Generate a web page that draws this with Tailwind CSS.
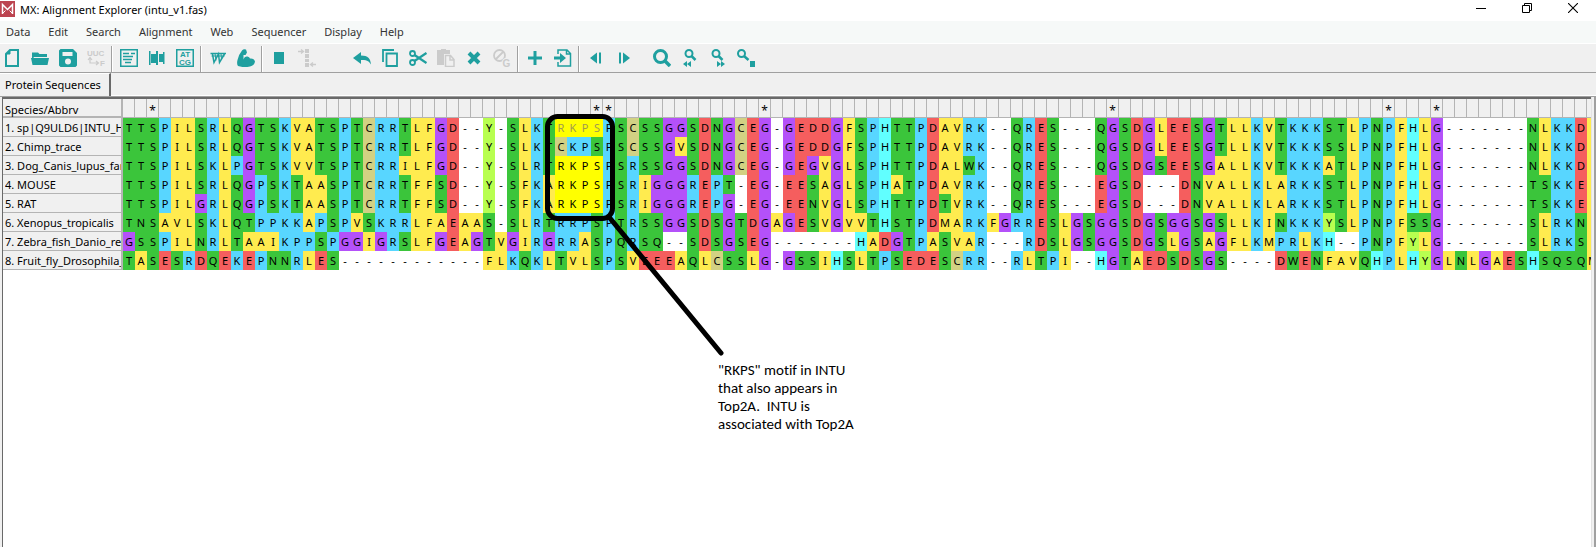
<!DOCTYPE html>
<html lang="en">
<head>
    <meta charset="UTF-8">
    <meta name="viewport" content="width=device-width, initial-scale=1.0">
    <title>MX: Alignment Explorer (intu_v1.fas)</title>
    <script src="https://cdn.jsdelivr.net/npm/@tailwindcss/browser@4"></script>
</head>
<body class="flex h-screen flex-col overflow-hidden bg-[#f0f0f0] font-['Noto_Sans','Open_Sans',sans-serif] text-[11px] text-black">
    <!-- Title bar -->
    <header class="flex h-[21px] shrink-0 items-start bg-white">
        <svg class="mt-px h-4 w-[15px]" viewBox="0 0 15 16">
            <rect width="15" height="16" fill="#bc4450"/>
            <path d="M2.500 13V3.500l5 5 5-5V13" fill="none" stroke="#fff" stroke-width="1.500"/>
            <path d="M2.500 12.500l3-3M12.500 12.500l-3-3" fill="none" stroke="#fff"/>
        </svg>
        <h1 class="ml-[5px] h-5 leading-5">MX: Alignment Explorer (intu_v1.fas)</h1>
        <div class="ml-auto flex">
            <button class="flex h-4 w-[46px] items-center justify-center" aria-label="Minimize"><svg width="10" height="10" viewBox="0 0 10 10"><path d="M0 5.500h10" stroke="#000"/></svg></button>
            <button class="flex h-4 w-[46px] items-center justify-center" aria-label="Restore"><svg width="10" height="10" viewBox="0 0 10 10" fill="none" stroke="#000"><path d="M.5 2.500h7v7h-7zM2.500 2.500v-2h7v7h-2"/></svg></button>
            <button class="flex h-4 w-[46px] items-center justify-center" aria-label="Close"><svg width="10" height="10" viewBox="0 0 10 10"><path d="M0 0l10 10M10 0L0 10" stroke="#000" stroke-width="1.100"/></svg></button>
        </div>
    </header>

    <!-- Menu -->
    <nav class="flex h-[23px] shrink-0 items-center gap-[18px] border-b border-white bg-[#f6f9f8] pl-1.5 text-[#333]">
        <button>Data</button>
        <button>Edit</button>
        <button>Search</button>
        <button>Alignment</button>
        <button>Web</button>
        <button>Sequencer</button>
        <button>Display</button>
        <button>Help</button>
    </nav>

    <!-- Toolbar -->
    <div class="flex h-[29px] shrink-0 items-stretch border-b border-[#a0a0a0] text-[#1f9f9f]">
        <div class="-ml-0.5 flex">
            <button class="flex w-7 items-center justify-center" aria-label="New"><svg width="18" height="18" viewBox="0 0 18 18" fill="none" stroke="currentColor" stroke-width="2"><path d="M7 1h8v16H3V5z"/><path d="M3 5h4V1z" fill="currentColor" stroke-width="1"/></svg></button>
            <button class="flex w-7 items-center justify-center" aria-label="Open"><svg width="18" height="18" viewBox="0 0 18 18" fill="currentColor"><path d="M1 3.500h6l1.500 1.500H16v3H3l-2 3zM0 9h18l-1.500 7H1.500z"/></svg></button>
            <button class="flex w-7 items-center justify-center" aria-label="Save"><svg width="18" height="18" viewBox="0 0 18 18" fill="currentColor"><path fill-rule="evenodd" d="M1.500 0H14l4 4v12.500L16.500 18h-15L0 16.500v-15zM3.500 3v4h10V3zM9 9.500a3 3 0 100 6 3 3 0 000-6z"/></svg></button>
            <button class="flex w-7 items-center justify-center text-[#cbcbcb]" aria-label="Translate"><svg width="18" height="18" viewBox="0 0 18 18" fill="currentColor"><text x="0" y="7" font-family="Liberation Sans" font-size="8" font-weight="bold">UUC</text><text x="13" y="17" font-family="Liberation Sans" font-size="8" font-weight="bold">F</text><path d="M3 9v5h8M1 11l2-2.500L5 11M9 12l2.500 2L9 16" fill="none" stroke="currentColor" stroke-width="1.200"/></svg></button>
        </div>
        <div class="w-[5px] pt-0.5 pl-px"><div class="h-full w-0.5 border-r border-l border-r-white border-l-[#a0a0a0]"></div></div>
        <div class="flex">
            <button class="flex w-7 items-center justify-center" aria-label="Sequence properties"><svg width="18" height="18" viewBox="0 0 18 18" fill="none" stroke="currentColor"><rect x=".75" y=".75" width="16.500" height="16.500" stroke-width="1.500"/><path d="M3 4.500h6M11 4.500h4M3 7.500h10M3 10.500h9M5 13.500h6" stroke-width="1.300"/></svg></button>
            <button class="flex w-7 items-center justify-center" aria-label="Align"><svg width="18" height="18" viewBox="0 0 18 18" fill="currentColor"><path d="M1 2h1.500v14H1zM3 5h5v9H3zM8 2h2v14H8zM11 5h4v8h-4zM15 3h1.500v12H15z"/></svg></button>
            <button class="flex w-7 items-center justify-center" aria-label="DNA"><svg width="18" height="18" viewBox="0 0 18 18" fill="currentColor"><rect x=".75" y=".75" width="16.500" height="16.500" fill="none" stroke="currentColor" stroke-width="1.500"/><text x="9" y="8" text-anchor="middle" font-family="Liberation Sans" font-size="8" font-weight="bold">AT</text><text x="9" y="15.500" text-anchor="middle" font-family="Liberation Sans" font-size="8" font-weight="bold">CG</text></svg></button>
        </div>
        <div class="w-[5px] pt-0.5 pl-px"><div class="h-full w-0.5 border-r border-l border-r-white border-l-[#a0a0a0]"></div></div>
        <div class="flex">
            <button class="flex w-7 items-center justify-center" aria-label="ClustalW"><svg width="18" height="18" viewBox="0 0 18 18" fill="none" stroke="currentColor"><path d="M1.500 4.500H17M3.500 5l1.500 8.500L9.500 5l1 8.500L15.500 5" stroke-width="1.500"/><path d="M6 4.500l1 7M12 4.500l.5 6M2.500 7h13" stroke-width="1"/></svg></button>
            <button class="flex w-7 items-center justify-center" aria-label="Muscle"><svg width="18" height="18" viewBox="0 0 18 18" fill="currentColor"><path d="M5 1.500Q6.500-.5 9 .5l1 3-1.500 2.500L6.500 6v4.500q1-3.500 4-3 2 .3 2.500 2 4-.5 5 3-.5 4-5 5-6 1.500-12-.5Q-.5 15 .5 11 2 5 5 1.500z"/></svg></button>
        </div>
        <div class="w-[5px] pt-0.5 pl-px"><div class="h-full w-0.5 border-r border-l border-r-white border-l-[#a0a0a0]"></div></div>
        <div class="flex">
            <button class="flex w-7 items-center justify-center" aria-label="Mark site"><svg width="18" height="18" viewBox="0 0 18 18" fill="currentColor"><path d="M4 3h10v12H4z"/></svg></button>
            <button class="flex w-7 items-center justify-center text-[#cbcbcb]" aria-label="Align marked sites"><svg width="18" height="18" viewBox="0 0 18 18" fill="currentColor"><path d="M7 0h4v4H7zM7 5h4v4H7zM7 10h4v3H7zM7 14h4v4H7z"/><path d="M0 2.500h5M3 .5l2.500 2L3 4.500M18 15.500h-5M15 13.500l-2.500 2 2.500 2" fill="none" stroke="currentColor" stroke-width="1.300"/></svg></button>
        </div>
        <div class="ml-[27px] flex">
            <button class="flex w-7 items-center justify-center" aria-label="Undo"><svg width="18" height="18" viewBox="0 0 18 18" fill="currentColor"><path d="M8 3v3.500c7 0 9.500 3 10 9-2.500-4-5-4.500-10-4.500v4L0 9z"/></svg></button>
            <button class="flex w-7 items-center justify-center" aria-label="Copy"><svg width="18" height="18" viewBox="0 0 18 18" fill="none" stroke="currentColor" stroke-width="1.800"><path d="M5.500 4.500h10.500v12.500H5.500zM2 13V1h11"/></svg></button>
            <button class="flex w-7 items-center justify-center" aria-label="Cut"><svg width="18" height="18" viewBox="0 0 18 18" fill="none" stroke="currentColor" stroke-width="1.800"><circle cx="3.500" cy="4.500" r="2.500"/><circle cx="3.500" cy="13.500" r="2.500"/><path d="M5.500 6L17.500 14M5.500 12L17.500 4" stroke-width="2.300"/></svg></button>
            <button class="flex w-7 items-center justify-center text-[#cbcbcb]" aria-label="Paste"><svg width="18" height="18" viewBox="0 0 18 18" fill="currentColor"><path d="M0 1h4V0h5v1h4v4H7v11H0z"/><path d="M8.500 6.500h5l3.500 4v7H8.500zM13 6.500v4.500h4" fill="#f0f0f0" stroke="currentColor" stroke-width="1.500"/></svg></button>
            <button class="flex w-7 items-center justify-center" aria-label="Delete"><svg width="18" height="18" viewBox="0 0 18 18" stroke="currentColor" stroke-width="4"><path d="M4 4l10 10M14 4L4 14"/></svg></button>
            <button class="flex w-7 items-center justify-center text-[#cbcbcb]" aria-label="Delete gap-only sites"><svg width="18" height="18" viewBox="0 0 18 18" fill="none" stroke="currentColor" stroke-width="1.800"><circle cx="6.500" cy="6.500" r="5.500"/><path d="M2.500 10.500l8-8"/><text x="9.500" y="17.500" fill="currentColor" stroke="#f0f0f0" stroke-width="2" paint-order="stroke" font-family="Liberation Sans" font-size="10" font-weight="bold">G</text></svg></button>
        </div>
        <div class="w-[5px] pt-0.5 pl-px"><div class="h-full w-0.5 border-r border-l border-r-white border-l-[#a0a0a0]"></div></div>
        <div class="flex">
            <button class="flex w-7 items-center justify-center" aria-label="Add sequence"><svg width="18" height="18" viewBox="0 0 18 18" fill="currentColor"><path d="M7.500 2h3v5.500H16v3h-5.500V16h-3v-5.500H2v-3h5.500z"/></svg></button>
            <button class="flex w-7 items-center justify-center" aria-label="Insert from file"><svg width="18" height="18" viewBox="0 0 18 18" fill="none" stroke="currentColor" stroke-width="1.500"><path d="M4 5V1h9l3.500 3.500V17H4v-4M12.500 1v4h4"/><path d="M0 7.500h6V4l6 5-6 5v-3.500H0z" fill="currentColor" stroke="none"/></svg></button>
        </div>
        <div class="w-[5px] pt-0.5 pl-px"><div class="h-full w-0.5 border-r border-l border-r-white border-l-[#a0a0a0]"></div></div>
        <div class="flex">
            <button class="flex w-7 items-center justify-center" aria-label="Previous site"><svg width="18" height="18" viewBox="0 0 18 18" fill="currentColor"><path d="M3 9l7-5.500v11zM12 3.500h2v11h-2z"/></svg></button>
            <button class="flex w-7 items-center justify-center" aria-label="Next site"><svg width="18" height="18" viewBox="0 0 18 18" fill="currentColor"><path d="M15 9L8 3.500v11zM4 3.500h2v11H4z"/></svg></button>
        </div>
        <div class="ml-2.5 flex">
            <button class="flex w-7 items-center justify-center" aria-label="Find"><svg width="18" height="18" viewBox="0 0 18 18" fill="none" stroke="currentColor"><circle cx="7.500" cy="7.500" r="6" stroke-width="3"/><path d="M12 12l5 5" stroke-width="3.500"/></svg></button>
            <button class="flex w-7 items-center justify-center" aria-label="Find previous"><svg width="18" height="18" viewBox="0 0 18 18" fill="none" stroke="currentColor"><circle cx="8" cy="4.500" r="3.500" stroke-width="2"/><path d="M10.500 7l4 4" stroke-width="2.500"/><path d="M2 15l4-3v6zM6 15l4-3v6z" fill="currentColor" stroke="none"/></svg></button>
            <button class="flex w-7 items-center justify-center" aria-label="Find next"><svg width="18" height="18" viewBox="0 0 18 18" fill="none" stroke="currentColor"><circle cx="7" cy="4.500" r="3.500" stroke-width="2"/><path d="M9.500 7l4 4" stroke-width="2.500"/><path d="M16 15l-4-3v6zM12 15l-4-3v6z" fill="currentColor" stroke="none"/></svg></button>
            <button class="flex w-7 items-center justify-center" aria-label="Highlight motif"><svg width="18" height="18" viewBox="0 0 18 18" fill="none" stroke="currentColor"><circle cx="4.500" cy="4.500" r="3.500" stroke-width="2"/><path d="M7 7l4.500 4" stroke-width="2.500"/><path d="M13 12h5v6h-5z" fill="currentColor" stroke="none"/></svg></button>
        </div>
    </div>

    <!-- Tabs -->
    <div class="flex h-[23px] shrink-0">
        <button class="border-t border-r-2 border-t-white border-r-[#696969] pr-2 pl-[5px] whitespace-nowrap">Protein Sequences</button>
        <div class="flex-1 border-b border-white"></div>
    </div>

    <!-- Alignment -->
    <main class="flex min-h-0 flex-1 border-t border-[#a0a0a0] pl-0.5">
        <div class="relative flex-1 overflow-hidden border-t-2 border-l border-[#696969] bg-white">
            <table class="w-[1596px] table-fixed border-separate border-spacing-0">
                <colgroup id="cols"><col class="w-[120px]"></colgroup>
                <thead><tr id="sites"><th class="h-[19px] border-r-2 border-b-2 border-[#b4b4b4] bg-[#f0f0f0] p-0 pt-1 pl-0.5 text-left leading-3 font-normal">Species/Abbrv</th></tr></thead>
                <tbody id="rows"></tbody>
            </table>

            <!-- Motif callout -->
            <svg class="absolute top-0 left-0" width="740" height="270" viewBox="0 0 740 270" fill="none" stroke="#000" stroke-width="5" stroke-linecap="round">
                <rect x="544.500" y="17.500" width="65" height="102" rx="10"/>
                <path d="M606 118L718 254"/>
            </svg>
            <p class="absolute top-[262px] left-[715px] w-40 font-[Carlito,Calibri,Lato,sans-serif] text-[15px] leading-[18px] whitespace-pre [font-variant-ligatures:none]">"RKPS" motif in INTU
that also appears in
Top2A.  INTU is
associated with Top2A</p>
        </div>
        <div class="w-[5px] border-r-2 border-l border-l-[#e3e3e3] border-r-[#a0a0a0]"></div>
    </main>

    <script>
        const colors = {
            green: 'bg-[#3bc53b]',
            yellow: 'bg-[#ffeb4f]',
            blue: 'bg-[#58d6ff]',
            purple: 'bg-[#b451f9]',
            red: 'bg-[#f55e5e]',
            khaki: 'bg-[#d2d183]',
            lime: 'bg-[#b8ff50]',
            cyan: 'bg-[#61ffff]'
        };
        const groups = { TSNQW: 'green', ILVAFM: 'yellow', PRK: 'blue', G: 'purple', ED: 'red', C: 'khaki', Y: 'lime', H: 'cyan' };

        const sequences = [
            ['1. sp|Q9ULD6|INTU_H', 'TTSPILSRLQGTSKVATSPTCRRTLFGD--Y-SLKTRKPSPSCSSGGSDNGCEG-GEDDGFSPHTTPDAVRK--QRES---QGSDGLEESGTLLKVTKKKSTLPNPFHLG-------NLKKD'],
            ['2. Chimp_trace', 'TTSPILSRLQGTSKVATSPTCRRTLFGD--Y-SLKTCKPSPSCSSGVSDNGCEG-GEDDGFSPHTTPDAVRK--QRES---QGSDGLEESGTLLKVTKKKSSLPNPFHLG-------NLKKD'],
            ['3. Dog_Canis_lupus_far', 'TTSPILSKLPGTSKVVTSPTCRRILFGD--Y-SLRTRKPSPSRSSGGSDNGCEG-GEGVGLSPHTTPDALWK--QRES---QGSDGSEESGALLKVTKKKATLPNPFHLG-------NLKKD'],
            ['4. MOUSE', 'TTSPILSRLQGPSKTAASPTCRRTFFSD--Y-SFKARKPSPSRIGGGREPT-EG-EESAGLSPHATPDAVRK--QRES---EGSD---DNVALLKLARKKSTLPNPFHLG-------TSKKE'],
            ['5. RAT', 'TTSPILGRLQGPSKTAASPTCRRTFFSD--Y-SFKARKPSPSRIGGGREPG-EG-EENVGLSPHTTPDTVRK--QRES---EGSD---DNVALLKLARKKSTLPNPFHLG-------TSKKE'],
            ['6. Xenopus_tropicalis', 'TNSAVLSKLQTPPKKAPSPVSKRRLFAEAAS-SLRTRRPSPTRSSGGSDSGTDGAGESVGVVTHSTPDMARKFGRRESLGSGGSDGSGGSGSLLKINKKKYSLPNPFSSG-------SLRKN'],
            ['7. Zebra_fish_Danio_re', 'GSSPILNRLTAAIKPPSPGGIGRSLFGEAGTVGIRGRRASPQRSQ--SDSGSEG-------HADGTPASVAR---RDSLGSGGSDGSLGSAGFLKMPRLKH--PNPFYLG-------SLRKS'],
            ['8. Fruit_fly_Drosophila_', 'TASESRDQEKEPNNRLES------------FLKQKLTVLSPSVEEEAQLCSSLG-GSSIHSLTPSEDESCRR--RLTPI--HGTAEDSDSGS----DWENFAVQHPLHYGLNLGAESHSQSQM']
        ];
        const siteCount = 123;
        const conserved = [2, 39, 40, 53, 82, 105, 109];
        const motifStart = 36, motifEnd = 39;

        function colorOf(residue) {
            const key = Object.keys(groups).find(k => k.includes(residue));
            return key ? colors[groups[key]] : 'bg-white';
        }

        for (let i = 0; i < siteCount; i++) {
            const col = document.createElement('col');
            col.className = 'w-3';
            document.getElementById('cols').append(col);

            const site = document.createElement('th');
            site.className = 'border-r border-b border-[#b4b4b4] bg-[#f0f0f0] p-0 pt-1.5 text-center text-xs leading-3 font-normal';
            site.textContent = conserved.includes(i) ? '*' : '';
            document.getElementById('sites').append(site);
        }

        sequences.forEach(([name, residues], row) => {
            const tr = document.createElement('tr');
            const th = document.createElement('th');
            th.className = 'h-[19px] border-r-2 border-b border-[#b4b4b4] bg-[#f0f0f0] p-0 pt-0.5 pl-0.5 text-left leading-4 font-normal';
            const label = document.createElement('div');
            label.className = 'overflow-hidden whitespace-nowrap';
            label.textContent = name;
            th.append(label);
            tr.append(th);

            for (let i = 0; i < siteCount; i++) {
                const residue = residues[i] || '';
                const td = document.createElement('td');
                const inMotif = i >= motifStart && i <= motifEnd && [0, 2, 3, 4].includes(row);
                const color = inMotif ? 'bg-[#ffff00]' : residue ? colorOf(residue) : colors.yellow;
                td.className = 'p-0 text-center text-[11px] leading-[19px] ' + color;
                if (inMotif && row === 0) td.classList.add('text-[#a09a50]');
                td.textContent = residue;
                tr.append(td);
            }
            document.getElementById('rows').append(tr);
        });
    </script>
</body>
</html>
